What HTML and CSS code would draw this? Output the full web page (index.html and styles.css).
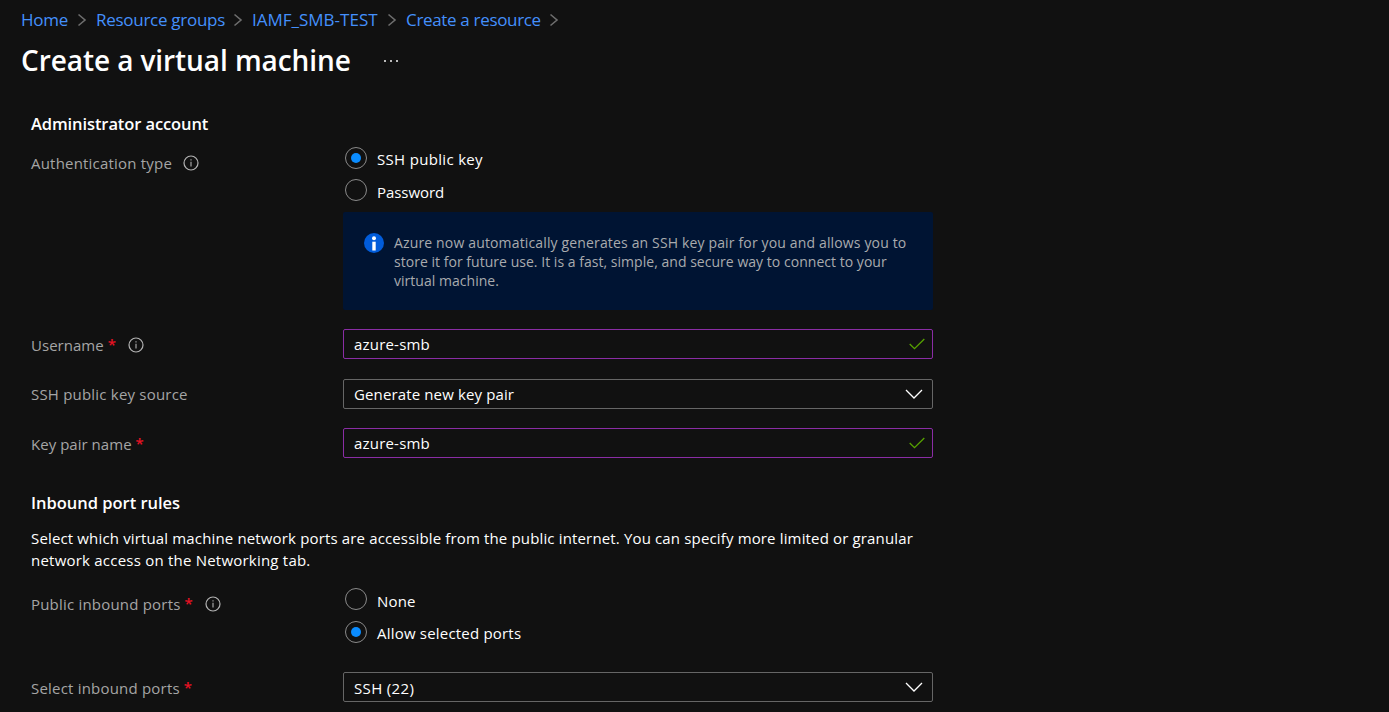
FILE: index.html
```html
<!DOCTYPE html>
<html lang="en">
<head>
<meta charset="utf-8">
<title>Create a virtual machine</title>
<link rel="stylesheet" href="styles.css">
</head>
<body>
<svg class="sprite" aria-hidden="true">
  <symbol id="info" viewBox="0 0 16 16"><circle cx="8" cy="8" r="7" fill="none" stroke="currentColor" stroke-width="1.2"/><path d="M8 6.7V11.6M8 4.3V5.6" stroke="currentColor" stroke-width="1.1"/></symbol>
  <symbol id="crumb" viewBox="0 0 10 14"><path d="M1.5 1.5 8 7 1.5 12.5" fill="none" stroke="currentColor" stroke-width="1.6"/></symbol>
  <symbol id="down" viewBox="0 0 18 10"><path d="M1 1 9 9 17 1" fill="none" stroke="currentColor" stroke-width="1.3"/></symbol>
  <symbol id="check" viewBox="0 0 16 12"><path d="M.7 6 5.5 10.7 15.3 1" fill="none" stroke="currentColor" stroke-width="1.3"/></symbol>
</svg>

<nav class="crumbs">
  <a class="c1">Home</a><svg class="sep"><use href="#crumb"/></svg>
  <a class="c2">Resource groups</a><svg class="sep"><use href="#crumb"/></svg>
  <a class="c3">IAMF_SMB-TEST</a><svg class="sep"><use href="#crumb"/></svg>
  <a class="c4">Create a resource</a><svg class="sep"><use href="#crumb"/></svg>
</nav>

<header class="title">
  <h1>Create a virtual machine</h1>
  <span class="more"><i></i><i></i><i></i></span>
</header>

<main class="form">
  <h2>Administrator account</h2>

  <div class="row auth">
    <div class="label">Authentication type<svg class="info"><use href="#info"/></svg></div>
    <div>
      <div class="radio on"><span class="dot"></span><span class="rt key">SSH public key</span></div>
      <div class="radio second"><span class="dot"></span><span class="rt low">Password</span></div>
      <div class="note">
        <svg class="badge" viewBox="0 0 20 20"><circle cx="10" cy="10" r="10" fill="#015cda"/><circle cx="10" cy="5.2" r="2" fill="#fff"/><path d="M8.3 8.7H11.7V17.5H8.3Z" fill="#fff"/></svg>
        <p>Azure now automatically generates an SSH key pair for you and allows you to<br><span class="l2">store it for future use. It is a fast, simple, and secure way to connect to your<br>virtual machine.</span></p>
      </div>
    </div>
  </div>

  <div class="row user">
    <div class="label"><span>Username</span><b>*</b><svg class="info"><use href="#info"/></svg></div>
    <div class="field valid"><span>azure-smb</span><svg class="check"><use href="#check"/></svg></div>
  </div>
  <div class="row source">
    <div class="label">SSH public key source</div>
    <div class="field"><span class="gen">Generate new key pair</span><svg class="down"><use href="#down"/></svg></div>
  </div>
  <div class="row pair">
    <div class="label"><span>Key pair name</span><b>*</b></div>
    <div class="field valid"><span>azure-smb</span><svg class="check"><use href="#check"/></svg></div>
  </div>

  <h2 class="inbound">Inbound port rules</h2>
  <p class="desc">Select which virtual machine network ports are accessible from the public internet. You can specify more limited or granular<br><span class="l2">network access on the Networking tab.</span></p>

  <div class="row ports">
    <div class="label">Public inbound ports<b>*</b><svg class="info"><use href="#info"/></svg></div>
    <div>
      <div class="radio third"><span class="dot"></span><span class="rt low">None</span></div>
      <div class="radio on"><span class="dot"></span><span class="rt">Allow selected ports</span></div>
    </div>
  </div>
  <div class="row select">
    <div class="label">Select inbound ports<b>*</b></div>
    <div class="field"><span class="ssh">SSH (22)</span><svg class="down"><use href="#down"/></svg></div>
  </div>
</main>
</body>
</html>
```
FILE: styles.css
```css
* { box-sizing: border-box; }
html, body { height: 100%; overflow: hidden; }
body {
  margin: 0;
  background: #111;
  color: #fff;
  font: 15px/22px "Open Sans", "Noto Sans", sans-serif;
  letter-spacing: .2px;
}
h1, h2, p { margin: 0; }
.sprite { display: none; }

.crumbs {
  display: flex;
  align-items: center;
  height: 40px;
  padding-left: 21px;
  font-size: 17px;
  letter-spacing: -.28px;
  color: #4490fc;
}
.crumbs a { flex: none; white-space: nowrap; }
.c1 { width: 56px; }
.c2 { width: 138px; }
.c3 { width: 136px; letter-spacing: 0; }
.c4 { width: 144px; letter-spacing: -.33px; }
.sep { flex: none; width: 10px; height: 14px; margin-right: 8px; color: #6e6e6e; }
.c1 + .sep { margin-right: 9px; }
.c2 + .sep, .c3 + .sep { margin-left: -1px; margin-right: 9px; }
.c4 + .sep { margin-left: -1px; }

.title { display: flex; align-items: center; height: 40px; padding-left: 21px; }
h1 { width: 363px; font-size: 28px; line-height: 40px; font-weight: 600; letter-spacing: -.08px; }
.more { display: flex; gap: 4px; padding-top: 2px; }
.more i { width: 2px; height: 2px; background: #bbb; }

.form { padding: 32px 0 0 31px; }
h2 { height: 24px; font-size: 16.5px; line-height: 24px; font-weight: 600; letter-spacing: -.1px; }
.row { display: grid; grid-template-columns: 312px 590px; }
.label { display: flex; align-items: center; height: 32px; color: #a5a5a5; }
.label span { letter-spacing: .03px; }
.label b { width: 10px; margin-left: 4px; padding-bottom: 2px; font-weight: 600; color: #e81123; }
.info { width: 16px; height: 16px; margin-left: 10.5px; color: #b4b4b4; }
.label b + .info { margin-left: 10px; }

.auth { margin-top: 11px; }
.radio { display: flex; height: 32px; padding-left: 2px; }
.dot {
  display: grid;
  place-items: center;
  width: 22px;
  height: 22px;
  border: 1px solid #8a8a8a;
  border-radius: 50%;
}
.on .dot::after { content: ""; width: 10px; height: 10px; border-radius: 50%; background: #0a8cff; }
.rt { margin-left: 10px; padding-top: 1px; }
.rt.key { letter-spacing: .32px; }
.rt.low { padding-top: 2px; }
.second { height: 33px; }
.second .rt { letter-spacing: -.05px; }
.third { height: 33px; }

.note {
  display: flex;
  height: 98px;
  padding: 21px 0 0 21px;
  border-radius: 2px;
  background: #001433;
  color: #a9abae;
  font-size: 14px;
  line-height: 19px;
  letter-spacing: .15px;
}
.note p { margin-left: 10px; }
.note .l2 { letter-spacing: .03px; }
.badge { width: 20px; height: 20px; }

.field {
  display: flex;
  align-items: center;
  justify-content: space-between;
  height: 30px;
  padding: 0 7px 0 10px;
  border: 1px solid #666;
  border-radius: 2px;
}
.field.valid { border-color: #8a2da5; }
.gen { letter-spacing: .13px; }
.ssh { padding-top: 1px; letter-spacing: .35px; }
.check { width: 16px; height: 12px; color: #57a300; }
.down { width: 18px; height: 10px; margin-right: 2px; color: #fff; }

.user { margin-top: 19px; }
.source { margin-top: 18px; }
.source .label { height: 30px; }
.pair { margin-top: 19px; }
.inbound { margin-top: 31px; letter-spacing: -.02px; }
.desc { margin-top: 12px; letter-spacing: .15px; white-space: nowrap; }
.desc .l2 { letter-spacing: .22px; }
.ports { margin-top: 17px; }
.select { margin-top: 19px; }
```
